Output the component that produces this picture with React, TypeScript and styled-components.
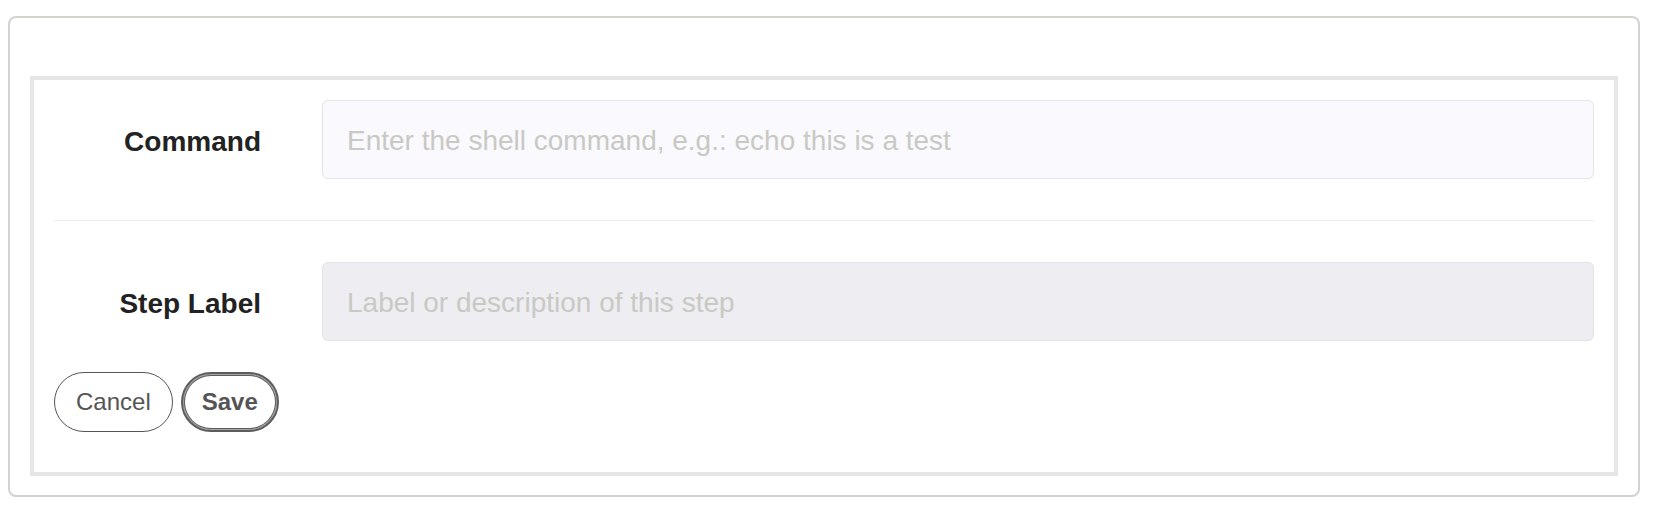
import React from "react";
import styled, { createGlobalStyle } from "styled-components";

const GlobalStyle = createGlobalStyle`
  html, body {
    margin: 0;
    padding: 0;
    background: #ffffff;
  }
  body {
    font-family: "Liberation Sans", Arial, Helvetica, sans-serif;
  }
  * { box-sizing: border-box; }
`;

const Card = styled.div`
  margin: 16px 24px 0 8px;
  width: 1632px;
  height: 481px;
  border: 2px solid #d3d3cd;
  border-radius: 8px;
  padding: 58px 20px 19px 20px;
  background: #fff;
`;

const Panel = styled.form`
  border: 4px solid #e6e6e6;
  height: 400px;
  padding: 0 20px;
  display: flex;
  flex-direction: column;
`;

const FieldRow = styled.div<{ $top: number; $bottom: number; $divider?: boolean }>`
  display: grid;
  grid-template-columns: 207px 1fr;
  column-gap: 61px;
  align-items: center;
  padding-top: ${(p) => p.$top}px;
  padding-bottom: ${(p) => p.$bottom}px;
  border-bottom: ${(p) => (p.$divider ? "1px solid #ececec" : "none")};
`;

const Label = styled.label`
  text-align: right;
  font-size: 28px;
  font-weight: 700;
  color: #222222;
  line-height: 1;
  padding-top: 4px;
`;

const TextInput = styled.input<{ $bg: string; $border: string }>`
  width: 100%;
  height: 79px;
  border: 1px solid ${(p) => p.$border};
  border-radius: 6px;
  background: ${(p) => p.$bg};
  padding: 2px 24px 0 24px;
  font-family: "Liberation Sans", Arial, Helvetica, sans-serif;
  font-size: 28px;
  color: #333;
  outline: none;
  &::placeholder {
    color: #c9c9c3;
  }
`;

const Actions = styled.div`
  display: flex;
  gap: 8px;
  margin-top: 31px;
`;

const Button = styled.button<{ $primary?: boolean }>`
  height: 60px;
  padding: 0 ${(p) => (p.$primary ? "19px" : "21px")};
  border-radius: 30px;
  background: #ffffff;
  color: #555555;
  font-family: "Liberation Sans", Arial, Helvetica, sans-serif;
  font-size: 24px;
  font-weight: ${(p) => (p.$primary ? 700 : 400)};
  border: ${(p) => (p.$primary ? "2px solid #5c5c5c" : "1.5px solid #555555")};
  box-shadow: ${(p) =>
    p.$primary ? "inset 0 0 0 1px #a8a8a8, inset 0 0 0 2px #5c5c5c" : "none"};
  cursor: pointer;
`;

export default function App() {
  return (
    <>
      <GlobalStyle />
      <Card>
        <Panel onSubmit={(e) => e.preventDefault()}>
          <FieldRow $top={20} $bottom={41} $divider>
            <Label htmlFor="cmd">Command</Label>
            <TextInput
              id="cmd"
              $bg="#f9f9fe"
              $border="#e3e3e9"
              placeholder="Enter the shell command, e.g.: echo this is a test"
            />
          </FieldRow>
          <FieldRow $top={41} $bottom={0}>
            <Label htmlFor="step">Step Label</Label>
            <TextInput
              id="step"
              $bg="#ededf2"
              $border="#e2e2e8"
              placeholder="Label or description of this step"
            />
          </FieldRow>
          <Actions>
            <Button type="button">Cancel</Button>
            <Button type="submit" $primary>
              Save
            </Button>
          </Actions>
        </Panel>
      </Card>
    </>
  );
}
